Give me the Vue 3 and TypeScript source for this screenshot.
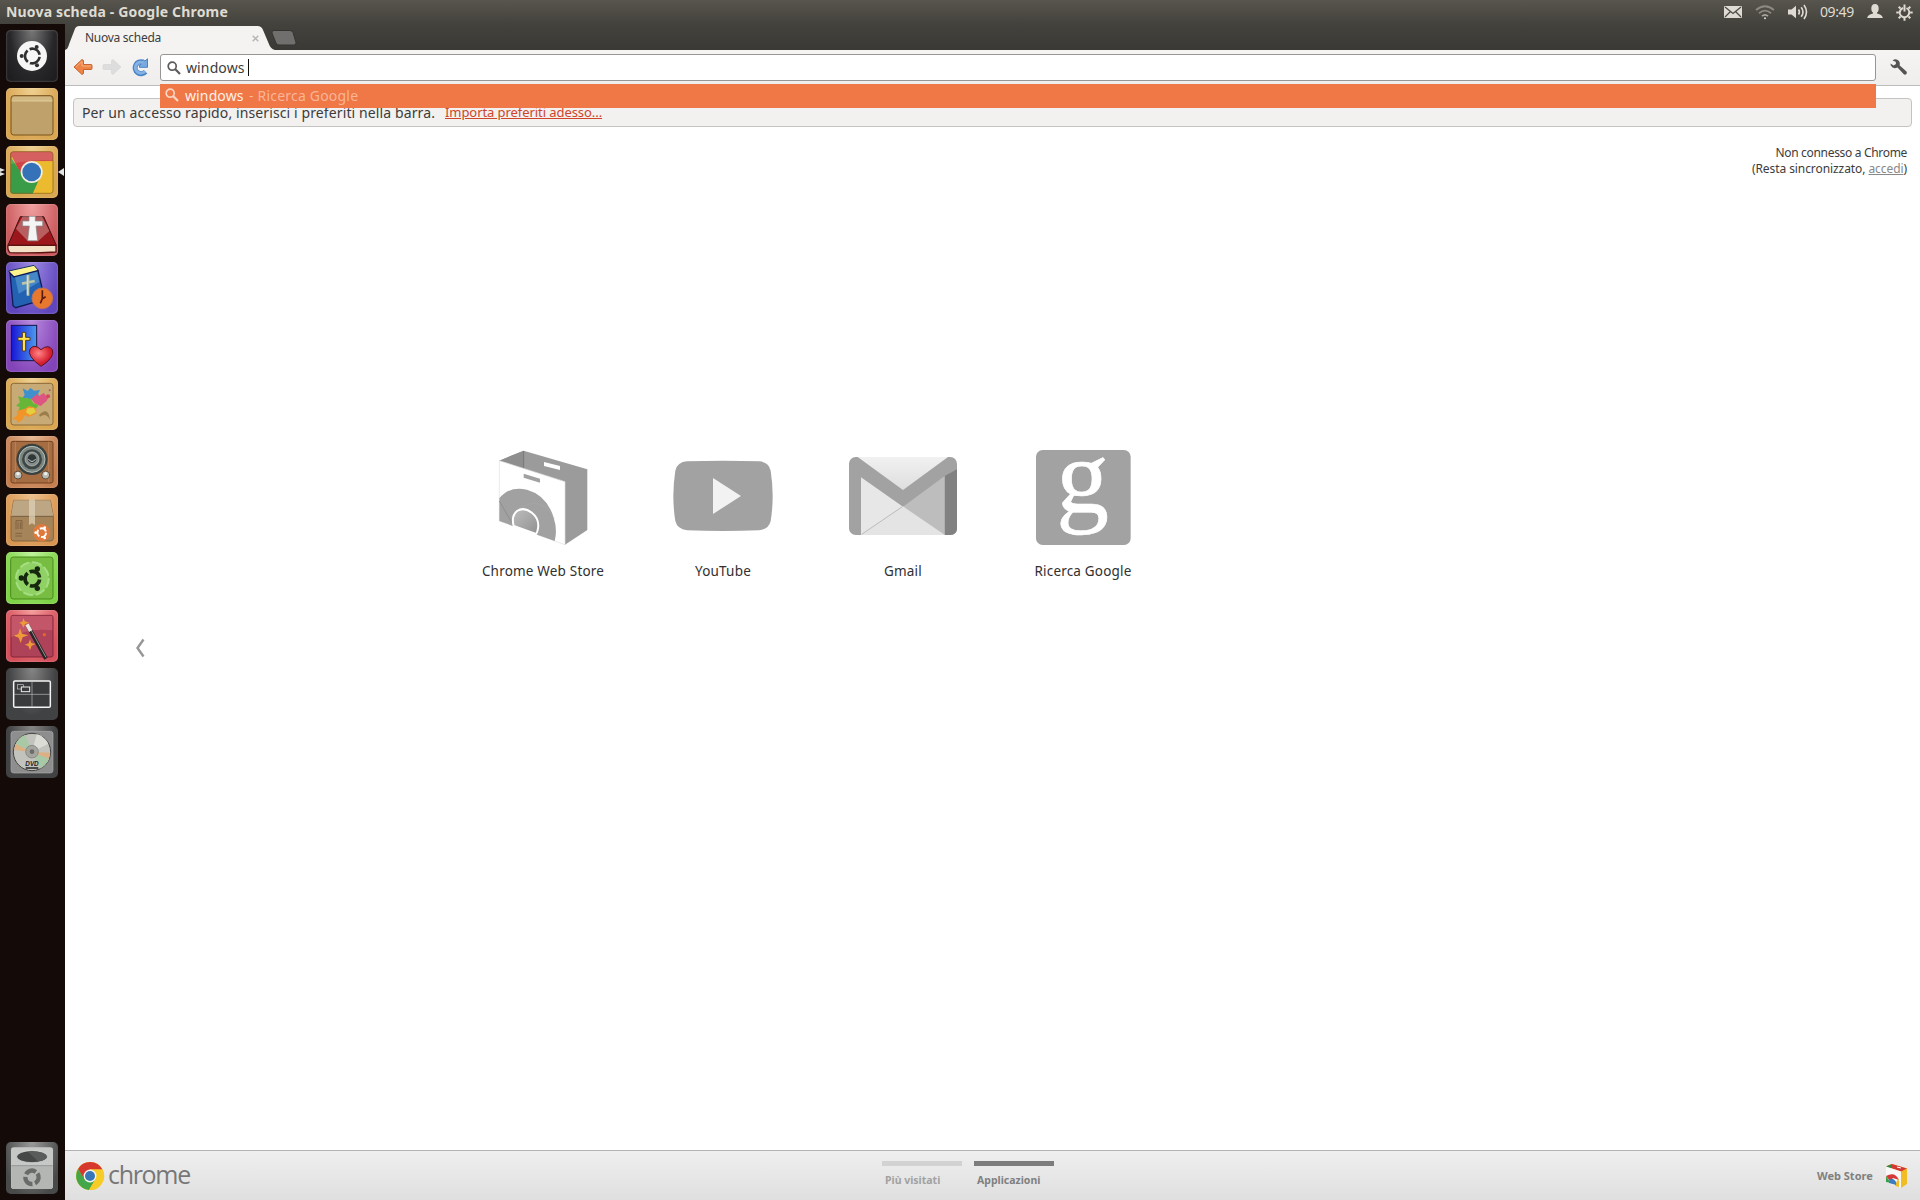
<script setup lang="ts">
interface AppTile {
  id: string
  label: string
  box: string
}

interface PageTab {
  label: string
  active: boolean
}

const launcher: string[] = [
  'dash', 'files', 'chrome', 'bible', 'biblereader', 'devotion', 'paint',
  'music', 'package', 'settings', 'wizard', 'workspaces', 'dvd',
]

const apps: AppTile[] = [
  { id: 'store', label: 'Chrome Web Store', box: '-51 30 540 330' },
  { id: 'youtube', label: 'YouTube', box: '489 30 540 330' },
  { id: 'gmail', label: 'Gmail', box: '-21 30 540 330' },
  { id: 'google', label: 'Ricerca Google', box: '519 30 540 330' },
]

const pages: PageTab[] = [
  { label: 'Più visitati', active: false },
  { label: 'Applicazioni', active: true },
]
</script>

<template>
  <div class="desktop">
    <header class="panel">
      <span class="title">Nuova scheda - Google Chrome</span>
      <div class="tray">
        <svg class="mail" width="18" height="12" viewBox="0 0 18 12"><rect width="18" height="12" rx="1" fill="#dfdbd2" /><path d="M1 1l8 6.500L17 1M1 11l5.500-5.500M17 11l-5.500-5.500" fill="none" stroke="#4a4944" stroke-width="1.200" /></svg>
        <svg class="wifi" width="20" height="15" viewBox="0 0 20 15" fill="none" stroke-width="1.800"><path d="M1 5Q10-2.500 19 5M4 8.200Q10 3 16 8.200" stroke="#8c8981" /><path d="M7 11.200Q10 8.500 13 11.200" stroke="#aaa79f" /><circle cx="10" cy="13.300" r="1" stroke="none" fill="#dfdbd2" /></svg>
        <svg class="volume" width="20" height="16" viewBox="0 0 20 16"><path d="M0 5.500h3.500L8 1.800v12.400L3.500 10.500H0z" fill="#dfdbd2" /><path d="M10.500 5.500q1.800 2.500 0 5M13.200 3.200q3.600 4.800 0 9.600M16 1q5 7 0 14" fill="none" stroke="#dfdbd2" stroke-width="1.600" /></svg>
        <span class="clock">09:49</span>
        <svg class="user" width="16" height="14" viewBox="0 0 16 14" fill="#dfdbd2"><ellipse cx="8" cy="4.500" rx="3.700" ry="4.500" /><path d="M6 7h4v2.500q5.500 1 5.800 4.500H.2Q.5 10.500 6 9.500z" /></svg>
        <svg class="gear" width="17" height="17" viewBox="-8.500 -8.500 17 17" fill="none" stroke="#dfdbd2" stroke-width="2"><circle r="4.700" stroke-dasharray="25.500 4" transform="rotate(-66)" /><path d="M-5.600 0h-2.600M5.600 0h2.600M0 5.600v2.600M-4 4l-1.800 1.800M4 4l1.800 1.800M-4-4l-1.800-1.800M4-4l1.800-1.800M0-1v-7" /></svg>
      </div>
    </header>

    <div class="workspace">
      <aside class="launcher">
        <div v-for="icon in launcher" :key="icon" class="tile" :class="icon">
          <svg v-if="icon === 'dash'" viewBox="0 0 156 156">
            <circle cx="78" cy="78" r="45" fill="#f6f6f6" />
            <circle cx="79" cy="78" r="22" fill="none" stroke="#303033" stroke-width="8" stroke-dasharray="39 7" transform="rotate(7 79 78)" />
            <g fill="#303033"><circle cx="47" cy="78" r="6" /><circle cx="92" cy="51" r="6" /><circle cx="93" cy="106" r="6" /></g>
          </svg>
          <svg v-else-if="icon === 'files'" viewBox="0 0 156 156">
            <rect x="15" y="23" width="126" height="118" rx="8" fill="#bea16b" stroke="#79531d" stroke-width="3" />
            <path d="M17 38q0-10 8-12h107q8 3 7 14z" fill="#d2b983" /><path d="M17 39h122" stroke="#f0dcab" stroke-width="2" />
          </svg>
          <svg v-else-if="icon === 'chrome'" viewBox="0 0 156 156">
            <rect x="13" y="17" width="128" height="126" rx="8" fill="#e9b72b" />
            <path d="M13 46V25q0-8 8-8h112q8 0 8 8v21H78L47 90 18 32z" fill="#cf4444" />
            <path d="M14 33L56 97l45 0-20 46H21q-8 0-8-8z" fill="#3b9c48" /><path d="M103 93L80 143h53q8 0 8-8V46H84z" fill="#ebba2e" />
            <circle cx="77" cy="78" r="33" fill="#f3eee0" /><circle cx="77" cy="78" r="28" fill="#3572b8" />
            <path d="M15 18h126v26q-58-5-126 10z" fill="#fff" opacity=".15" />
            <rect x="14" y="17" width="127" height="125" rx="8" fill="none" stroke="#7b5a20" stroke-width="2" />
          </svg>
          <svg v-else-if="icon === 'bible'" viewBox="0 0 156 156">
            <path d="M43 38h70l38 86H6z" fill="#9b171b" stroke="#471011" stroke-width="3" />
            <path d="M50 37h58l22 44-34 31H66L30 74z" fill="#d5a5a6" opacity=".5" />
            <path d="M6 124h144v20q-70 4-138 2-8-8-6-22z" fill="#f3e2c6" stroke="#5c1212" stroke-width="4" />
            <path d="M69 37h19v14h22v15H90l5 44H65l5-44H50V51h19z" fill="#f4f4f4" stroke="#888" stroke-width="2" />
          </svg>
          <svg v-else-if="icon === 'biblereader'" viewBox="0 0 156 156">
            <path d="M8 27L84 10l14 16-78 22z" fill="#fff58d" stroke="#143061" stroke-width="3" />
            <path d="M12 33l12 12 72-19 20 86-87 25-8-6z" fill="#2361b3" stroke="#101c59" stroke-width="4" />
            <path d="M27 46l66-17 7 31-62 35z" fill="#579bd2" opacity=".65" />
            <path d="M66 39v62M48 65l38-8" stroke="#bac5a9" stroke-width="8" /><path d="M64 42v56" stroke="#eee" stroke-width="2" />
            <circle cx="109" cy="109" r="31" fill="#e9782f" stroke="#be7058" stroke-width="3" /><path d="M109 85v25l-6 14M109 110l10-6" fill="none" stroke="#5b1910" stroke-width="5" />
          </svg>
          <svg v-else-if="icon === 'devotion'" viewBox="0 0 156 156">
            <defs><linearGradient id="cover"><stop stop-color="#1715d5" /><stop offset="1" stop-color="#4d9bee" /></linearGradient><radialGradient id="heart" cx=".4" cy=".35"><stop stop-color="#ff8585" /><stop offset="1" stop-color="#d51d2e" /></radialGradient></defs>
            <rect x="16" y="16" width="76" height="106" fill="url(#cover)" stroke="#141447" stroke-width="3" />
            <path d="M49 37h10v15h13v9H59v32H49V61H36v-9h13z" fill="#ffe44c" stroke="#543b27" stroke-width="3" />
            <path d="M105 139Q61 107 72 87q13-17 33 2 22-18 34 0 9 23-34 50z" fill="url(#heart)" stroke="#581324" stroke-width="3" />
          </svg>
          <svg v-else-if="icon === 'paint'" viewBox="0 0 156 156">
            <rect x="15" y="16" width="126" height="125" rx="8" fill="#c8aa77" stroke="#8b6837" stroke-width="3" />
            <path d="M50 31l15 8 8-9 12 8 17-2-6 12 7 12-20-1-10 8-10-7-15 2 8-12z" fill="#3f91ce" />
            <path d="M76 62l16-13 7 5 14-9 8 10 10-5-9 19-18 15-18-8z" fill="#dd5681" />
            <path d="M36 55l20 5 18 2 8 14 16 6-10 12-22 10-30-3 5-14-11-4 12-10z" fill="#67b638" />
            <path d="M57 92l13-8 20 7 2 15-17 8-9 3-9-6-8 15-16 9-1-10-13-2 15-12-2-12z" fill="#f1952b" /><path d="M64 91l19-2 7 13-18 9-12-8z" fill="#e3cf3f" />
            <path d="M99 111q22-22 30 0l3 15q-12-24-30-10z" fill="#9c7e4c" /><circle cx="131" cy="37" r="3" fill="#ad5864" /><circle cx="126" cy="55" r="6" fill="#d84761" />
          </svg>
          <svg v-else-if="icon === 'music'" viewBox="0 0 156 156">
            <rect x="15" y="16" width="126" height="125" rx="6" fill="#a66d43" stroke="#72401f" stroke-width="3" /><path d="M28 17v122M128 17v122" stroke="#c88d63" stroke-width="2" />
            <circle cx="78" cy="70" r="47" fill="#39413f" /><circle cx="78" cy="70" r="39" fill="#7c8782" stroke="#b7beb9" stroke-width="3" /><circle cx="78" cy="70" r="30" fill="#3e4645" /><circle cx="78" cy="69" r="21" fill="#858d8a" stroke="#c1c7c3" stroke-width="2" /><circle cx="78" cy="68" r="13" fill="#303837" /><path d="M67 69q11 15 22 0" fill="none" stroke="#c9cecd" stroke-width="3" />
            <g fill="#b9bcb5" stroke="#604d3b" stroke-width="3"><circle cx="36" cy="117" r="12" /><circle cx="119" cy="117" r="12" /></g><g fill="#f0f0ea"><circle cx="36" cy="113" r="5" /><circle cx="119" cy="113" r="5" /></g>
          </svg>
          <svg v-else-if="icon === 'package'" viewBox="0 0 156 156">
            <path d="M23 19h110l9 49v64q0 9-9 9H24q-9 0-9-9V68z" fill="#a5845a" stroke="#86643c" stroke-width="3" /><path d="M23 19h110l9 47H15z" fill="#bda683" /><path d="M16 67h125" stroke="#776043" stroke-width="3" />
            <path d="M69 16h18v77l-9-5-9 5z" fill="#ddd0b5" opacity=".75" /><path d="M30 106V80h18v26M36 105V85M43 105V85M28 118h20M28 126h20" fill="none" stroke="#715334" stroke-width="2" />
            <circle cx="107" cy="116" r="26" fill="#e07a3c" /><circle cx="107" cy="116" r="13" fill="none" stroke="#fff" stroke-width="6" stroke-dasharray="22 5" /><g fill="#fff"><circle cx="89" cy="116" r="4" /><circle cx="116" cy="101" r="4" /><circle cx="116" cy="132" r="4" /></g>
          </svg>
          <svg v-else-if="icon === 'settings'" viewBox="0 0 156 156">
            <rect x="14" y="15" width="127" height="126" rx="8" fill="#77bd42" stroke="#4b8b1b" stroke-width="3" />
            <circle cx="79" cy="80" r="49" fill="#8fd164" stroke="#a5de80" stroke-width="6" stroke-dasharray="25 13.500" stroke-linecap="round" />
            <circle cx="79" cy="80" r="22" fill="none" stroke="#16280e" stroke-width="11" stroke-dasharray="39 7" transform="rotate(7 79 80)" />
            <g fill="#16280e"><circle cx="46" cy="78" r="8" /><circle cx="94" cy="51" r="8" /><circle cx="94" cy="109" r="8" /></g>
          </svg>
          <svg v-else-if="icon === 'wizard'" viewBox="0 0 156 156">
            <rect x="15" y="16" width="126" height="125" rx="6" fill="#ae4259" stroke="#852539" stroke-width="3" /><path d="M16 17h123v44q-72-8-123 21z" fill="#d86a78" opacity=".5" />
            <path d="M42 55l6 16 19 5-17 6-6 17-6-16-15-6 14-5zM72 88l4 11 13 3-12 5-5 14-5-13-11-4 12-4zM52 24l4 10 13 4-12 4-5 11-5-11-8-4 10-3z" fill="#ed9b38" /><circle cx="115" cy="74" r="5" fill="#df6835" />
            <path d="M66 49l54 97" stroke="#2a2427" stroke-width="12" /><path d="M69 49l51 93" stroke="#aaa" stroke-width="2.500" /><path d="M63 43l11 20" stroke="#eee2dc" stroke-width="11" />
          </svg>
          <svg v-else-if="icon === 'workspaces'" viewBox="0 0 156 156">
            <rect x="23" y="39" width="110" height="79" rx="4" fill="#3a3b3c" stroke="#f4f4f4" stroke-width="4.500" /><path d="M78 40v77M24 79h108" stroke="#bdbdbd" stroke-width="2" /><rect x="34" y="50" width="18" height="13" fill="none" stroke="#ccc" stroke-width="2" /><rect x="46" y="57" width="25" height="14" fill="#3a3b3c" stroke="#eee" stroke-width="3" />
          </svg>
          <svg v-else viewBox="0 0 156 156">
            <rect x="15" y="16" width="126" height="125" rx="8" fill="#8e8e8e" stroke="#aaa" stroke-width="2" /><circle cx="78" cy="78" r="56" fill="#c3c3bd" stroke="#444" stroke-width="3" />
            <path d="M78 78L28 56q9-23 30-30zM78 78l52 20q-10 22-28 30z" fill="#a9c9a6" /><path d="M78 78L24 72l5-18zM78 78l51 20 4-18z" fill="#dcb083" /><path d="M78 78l14-54q23 6 35 29z" fill="#dcdcd6" />
            <circle cx="78" cy="77" r="19" fill="#a5a5a0" stroke="#777" stroke-width="2" /><circle cx="78" cy="77" r="7" fill="#6b6b6b" />
            <text x="78" y="121" text-anchor="middle" class="disc-label">DVD</text><path d="M59 126h38" stroke="#222" stroke-width="4" />
          </svg>
        </div>
        <div class="tile trash">
          <svg viewBox="0 0 156 156">
            <rect x="15" y="16" width="126" height="125" rx="8" fill="#c6c8c6" /><path d="M16 70h124v63q0 8-8 8H24q-8 0-8-8z" fill="#b4b6b4" /><path d="M16 71h124" stroke="#858785" stroke-width="2" />
            <ellipse cx="78" cy="44" rx="46" ry="18" fill="#464848" stroke="#e1e1e1" stroke-width="2" /><path d="M66 29l30 29q26-4 27-14-5-17-57-15z" fill="#5a5c5c" />
            <circle cx="78" cy="106" r="20" fill="none" stroke="#696b6a" stroke-width="13" stroke-dasharray="34 8" transform="rotate(-35 78 106)" />
          </svg>
        </div>
        <svg class="running" width="5" height="8" viewBox="0 0 5 8"><path d="M0 0l5 2-5 2zM0 4l5 2-5 2z" fill="#e4e4e4" /></svg>
        <svg class="focused" width="6" height="8" viewBox="0 0 6 8"><path d="M6 0v8L0 4z" fill="#e4e4e4" /></svg>
      </aside>

      <main class="browser">
        <div class="tabstrip">
          <div class="tab">
            <svg class="tab-shape" width="212" height="24" viewBox="0 0 212 24"><path d="M0 24c3-1 3.500-4 4.500-7l5-13q1-4 5-4h178q4 0 5.500 4l5.500 13q2 6 6.500 7z" fill="#f4f3f2" /></svg>
            <span class="tab-title">Nuova scheda</span>
            <svg class="tab-close" width="7" height="7" viewBox="0 0 7 7"><path d="M.7.7l5.600 5.600M6.300.7L.7 6.300" stroke="#b6b5b4" stroke-width="1.400" /></svg>
          </div>
          <svg class="newtab" width="26" height="16" viewBox="0 0 26 16"><path d="M3 .5h16q2 0 3 2l3 10q0 2.500-2 2.500H8q-2 0-3-2L1 3Q.5.500 3 .5z" fill="#706f6d" stroke="#353431" /></svg>
        </div>

        <div class="toolbar">
          <svg class="back" width="20" height="18" viewBox="0 0 20 18"><path d="M1 9l8-7.500 1.500 1v4H18q1 0 1 1v3q0 1-1 1h-7.500v4l-1.500 1z" fill="#ed8344" stroke="#c76431" /><path d="M3 9l6-5.500V8h9" fill="none" stroke="#f7ae80" /></svg>
          <svg class="forward" width="20" height="18" viewBox="0 0 20 18"><path d="M19 9l-8-7.500-1.500 1v4H2q-1 0-1 1v3q0 1 1 1h7.500v4l1.500 1z" fill="#dedddd" stroke="#d4d4d4" stroke-width=".6" /></svg>
          <svg class="reload" width="18" height="18" viewBox="0 0 18 18"><path d="M14.500 13.800A6 6 0 1 1 12 4" fill="none" stroke="#4a83c6" stroke-width="5" /><path d="M8.500 9.300V7.300l2.500-2L9.500 3.500l3-1.500 1.500 1L16.500.8V9.300z" fill="#78a9e0" stroke="#4a83c6" /><path d="M14 13.300A5.500 5.500 0 1 1 12.500 4.800" fill="none" stroke="#84b2e5" stroke-width="3" /></svg>
          <div class="omnibox">
            <svg width="14" height="14" viewBox="0 0 14 14" fill="none" stroke="#5c5c5c"><circle cx="5.200" cy="5.200" r="4" stroke-width="1.700" /><path d="M8.300 8.300l4.700 4.700" stroke-width="2.200" /></svg>
            <span class="query">windows</span><i class="caret"></i>
          </div>
          <svg class="wrench" width="18" height="17" viewBox="0 0 18 17"><path d="M2.500 1.500Q6-1 9 2q1.400 2 .7 4.500l6.800 6q1 1.500-.3 2.700-1.500 1-2.600-.2L7.500 8.500Q3 10.500.8 6.500L.5 4.500 3.500 6.500 6 5 5.700 2.700z" fill="#545454" /></svg>
          <div class="suggestion">
            <svg width="14" height="14" viewBox="0 0 14 14" fill="none" stroke="#fbd6c3"><circle cx="5.200" cy="5.200" r="4" stroke-width="1.700" /><path d="M8.300 8.300l4.700 4.700" stroke-width="2.200" /></svg>
            <span class="match">windows</span><span class="engine">- Ricerca Google</span>
          </div>
        </div>

        <section class="page">
          <div class="bookmarks"><span class="hint">Per un accesso rapido, inserisci i preferiti nella barra.</span><a class="import">Importa preferiti adesso...</a></div>
          <div class="login"><span class="status">Non connesso a Chrome</span><span class="sync">(Resta sincronizzato, <a>accedi</a>)</span></div>
          <div class="apps">
            <div v-for="app in apps" :key="app.id" class="app">
              <svg width="180" height="110" :viewBox="app.box">
                <defs>
                  <linearGradient id="paper" x1="0" y1="0" x2="0" y2="1"><stop stop-color="#f1f1f1" /><stop offset="1" stop-color="#dedede" /></linearGradient>
                  <linearGradient id="hub" x1="0" y1="0" x2="1" y2="1"><stop stop-color="#bdbdbd" /><stop offset="1" stop-color="#919191" /></linearGradient>
                </defs>
                <template v-if="app.id === 'store'">
                  <path d="M88 92l73-30 191 56v182l-67 44z" fill="#9b9b9b" /><path d="M88 92l73-30v54z" fill="#8e8e8e" /><path d="M161 63v50" stroke="#686868" stroke-width="2" />
                  <path d="M222 96l48 12v12l-48-12z" fill="#fff" />
                  <path d="M88 92l197 63v189L88 273z" fill="#fff" stroke="#e0e0e0" stroke-width="2" />
                  <path d="M161 131l49 15v12l-49-15z" fill="#a1a1a1" />
                  <path d="M88 205q30-38 83-26 60 17 80 84 12 36 3 70L88 273z" fill="#a1a1a1" /><path d="M88 213l37 64" stroke="#858585" stroke-width="2" /><path d="M145 236q70-42 108 30" fill="none" stroke="#b1b1b1" />
                  <path d="M131 288q-8-30 10-45 20-13 43 4 25 20 20 48-2 13-6 17z" fill="url(#hub)" stroke="#fff" stroke-width="6" />
                </template>
                <template v-else-if="app.id === 'youtube'">
                  <path d="M651 94q108-4 216 0 29 2 35 28 12 76 0 151-6 25-35 28-108 4-216 0-29-3-35-28-12-75 0-151 6-26 35-28z" fill="#a2a2a2" /><path d="M729 144l84 54-84 54z" fill="#f2f2f2" />
                </template>
                <template v-else-if="app.id === 'gmail'">
                  <rect x="87" y="81" width="324" height="234" rx="20" fill="#a2a2a2" /><path d="M374 138l37-20v177q0 20-20 20h-17z" fill="#818181" />
                  <path d="M113 81h271L249 180z" fill="url(#paper)" /><path d="M123 142l126 88-123 85h-3z" fill="#e7e7e7" /><path d="M374 138v177L249 230z" fill="#bdbdbd" /><path d="M123 315l126-86 126 86z" fill="#e4e4e4" /><path d="M125 313l122-83" stroke="#bcbcbc" stroke-width="3" />
                </template>
                <template v-else>
                  <rect x="648" y="60" width="284" height="285" rx="20" fill="#a2a2a2" /><text x="788" y="246" text-anchor="middle" class="google-mark">g</text>
                </template>
              </svg>
              <span class="label">{{ app.label }}</span>
            </div>
          </div>
          <svg class="previous" width="10" height="18" viewBox="0 0 10 18"><path d="M8.500.5L2.500 9l6 8.500" fill="none" stroke="#969696" stroke-width="2.400" /></svg>
        </section>

        <footer class="footer">
          <svg class="chrome-logo" width="28" height="28" viewBox="0 0 28 28"><circle cx="14" cy="14" r="14" fill="#f7c927" /><path d="M2 7a14 14 0 0 1 24.500.5H14L8 17z" fill="#d7382e" /><path d="M2 7a14 14 0 0 0 11 21l6-10H9z" fill="#43a648" /><path d="M14 7.500h12.500A14 14 0 0 1 13 28l6.500-11z" fill="#f7cc27" /><circle cx="14" cy="14" r="6.400" fill="#f5f5f5" /><circle cx="14" cy="14" r="5" fill="#3777b8" /></svg>
          <span class="wordmark">chrome</span>
          <nav class="pages"><div v-for="page in pages" :key="page.label" class="page-tab" :class="{ active: page.active }"><i></i><span>{{ page.label }}</span></div></nav>
          <span class="store-link">Web Store</span>
          <svg class="store-icon" width="23" height="24" viewBox="0 0 23 24"><path d="M1 2.500L7 0l15 4.500V20l-6 4z" fill="#f2bd23" /><path d="M1 2.500L7 0l15 4.500-6 3z" fill="#d33a36" /><path d="M1 2.500L6 .500v4z" fill="#328a48" /><path d="M1 2.500l15 5V24L1 18z" fill="#f8f8f8" /><path d="M1 12q9-5 13 4L8 14 5 17z" fill="#d63a36" /><path d="M1 12l5 7-5-1z" fill="#39a04a" /><path d="M13 14q2 4 1 9l-4-1z" fill="#f2bd23" /><path d="M4 19q0-5 4-4 4 2 3 6z" fill="#3c7bc0" /><path d="M12 3l4 1" stroke="#fff" /></svg>
        </footer>
      </main>
    </div>
  </div>
</template>

<style>
html, body { margin: 0; overflow: hidden; background: #fff; }
</style>

<style scoped>
* { box-sizing: border-box; }
svg { display: block; flex: none; overflow: visible; }
.desktop { width: 1920px; height: 1200px; display: flex; flex-direction: column; font-family: "Noto Sans", "Open Sans", sans-serif; color: #3c3c3c; white-space: nowrap; }
.panel { height: 24px; flex: none; display: flex; justify-content: space-between; padding: 0 7px 0 6px; background: linear-gradient(#57554d, #43423c); color: #dfdbd2; }
.title { font-size: 14px; font-weight: 700; line-height: 24px; letter-spacing: .17px; }
.tray { display: flex; }
.mail { margin-top: 6px; } .wifi { margin: 5px 0 0 13px; } .volume { margin: 4px 0 0 13px; }
.clock { width: 35px; margin-left: 12px; font-size: 14px; line-height: 24px; letter-spacing: -.4px; }
.user { margin: 4px 0 0 12px; } .gear { margin: 4px 0 0 13px; }
.workspace { flex: 1; display: flex; min-height: 0; }
.launcher { position: relative; width: 65px; flex: none; display: flex; flex-direction: column; gap: 6px; padding: 6px; background: #140a08; }
.tile { width: 52px; height: 52px; flex: none; border-radius: 5px; overflow: hidden; background: radial-gradient(ellipse at 50% 0, #efd091, #d9a651 75%); box-shadow: inset 0 0 2px #fff6; }
.tile svg { width: 52px; height: 52px; }
.tile.dash { background: radial-gradient(ellipse at 50% 0, #777, #27272a 60%, #1a1a1d); }
.tile.bible { background: radial-gradient(ellipse at 50% 0, #f1a0a0, #c9585b 80%); }
.tile.biblereader { background: radial-gradient(ellipse at 50% 0, #9c8ae3, #6046bd 80%); }
.tile.devotion { background: radial-gradient(ellipse at 50% 0, #b88ade, #8344b8 80%); }
.tile.music { background: radial-gradient(ellipse at 50% 0, #e8b994, #c47f50 80%); }
.tile.package { background: radial-gradient(ellipse at 50% 0, #edc08c, #d99650 80%); }
.tile.settings { background: radial-gradient(ellipse at 50% 0, #bdf39a, #7fd346 80%); }
.tile.wizard { background: radial-gradient(ellipse at 50% 0, #f59c9c, #d5505a 80%); }
.tile.workspaces, .tile.dvd { background: radial-gradient(ellipse at 50% 0, #858585, #414243 65%); box-shadow: none; }
.tile.trash { margin-top: auto; background: radial-gradient(ellipse at 50% 0, #999, #484a49 80%); box-shadow: none; }
.disc-label { font: italic 700 19px "Liberation Sans", sans-serif; fill: #222; }
.running { position: absolute; left: 0; top: 144px; }
.focused { position: absolute; right: 1px; top: 144px; }
.browser { flex: 1; display: flex; flex-direction: column; min-width: 0; background: #fff; }
.tabstrip { height: 26px; flex: none; display: flex; padding-top: 2px; background: linear-gradient(#43423d, #3a3935); }
.tab { position: relative; width: 205px; height: 24px; display: flex; align-items: center; padding-left: 20px; }
.tab-shape { position: absolute; left: 0; top: 0; }
.tab-title { position: relative; width: 167px; flex: none; font-size: 12px; line-height: 22px; letter-spacing: -.28px; }
.tab-close { position: relative; }
.newtab { margin: 4px 0 0 1px; }
.toolbar { position: relative; height: 36px; flex: none; display: flex; padding-left: 8px; background: linear-gradient(#f5f4f3, #efeeed); border-bottom: 1px solid #bebcba; }
.back, .forward, .reload { margin-top: 8px; }
.forward { margin-left: 9px; } .reload { margin-left: 9px; }
.omnibox { width: 1716px; height: 27px; margin: 4px 0 0 11px; display: flex; align-items: center; padding-left: 6px; background: #fff; border: 1px solid #979695; border-radius: 3px; }
.query { width: 62px; margin-left: 5px; font-size: 14px; letter-spacing: .12px; }
.caret { width: 1px; height: 17px; background: #111; }
.wrench { margin: 9px 0 0 14px; }
.suggestion { position: absolute; z-index: 2; left: 95px; top: 34px; width: 1716px; height: 24px; display: flex; align-items: center; padding: 0 0 2px 5px; background: #f07746; color: #fff0e8; font-size: 14px; letter-spacing: .12px; }
.match { width: 60px; margin-left: 6px; } .engine { margin-left: 4px; color: #f9b596; letter-spacing: .2px; }
.page { flex: 1; display: flex; flex-direction: column; padding: 12px 8px 0; min-height: 0; }
.bookmarks { height: 29px; flex: none; display: flex; align-items: center; padding-left: 8px; background: #f2f1f0; border: 1px solid #c5c3c1; border-radius: 4px; font-size: 14px; line-height: 20px; }
.hint { width: 363px; letter-spacing: .11px; }
.import { padding-bottom: 2px; color: #cf4528; text-decoration: underline; font-size: 13px; letter-spacing: -.07px; }
.login { display: flex; flex-direction: column; align-items: flex-end; padding: 18px 5px 0 0; font-size: 12px; line-height: 16px; }
.status { letter-spacing: -.32px; } .sync { letter-spacing: -.08px; }
.login a { color: #888; text-decoration: underline; }
.apps { display: flex; margin: 263px 0 0 380px; }
.app { width: 180px; display: flex; flex-direction: column; align-items: center; }
.label { margin-top: 11px; font-size: 13.500px; line-height: 20px; letter-spacing: .19px; color: #303030; }
.google-mark { font: 316px "Liberation Serif", serif; fill: #fff; stroke: #fff; stroke-width: 2px; }
.previous { margin: 58px 0 0 62px; }
.footer { height: 50px; flex: none; display: flex; padding-left: 11px; background: linear-gradient(#efefef, #dfdfdf); border-top: 1px solid #b2b2b2; }
.chrome-logo { margin-top: 11px; }
.wordmark { width: 120px; margin-left: 4px; font: 25px/46px "Open Sans", sans-serif; letter-spacing: -1.300px; color: #777; }
.pages { width: 180px; display: flex; gap: 12px; margin: 10px 0 0 654px; }
.page-tab { width: 80px; font-size: 10.500px; font-weight: 700; color: #a1a1a1; }
.page-tab i { display: block; height: 5px; background: #d2d2d2; } .page-tab span { display: block; padding-left: 3px; line-height: 28px; }
.page-tab.active { color: #808080; } .page-tab.active i { background: #7d7d7d; }
.store-link { width: 68px; margin-left: 755px; font-size: 11px; font-weight: 700; line-height: 50px; color: #808080; }
.store-icon { margin-top: 13px; }
</style>
